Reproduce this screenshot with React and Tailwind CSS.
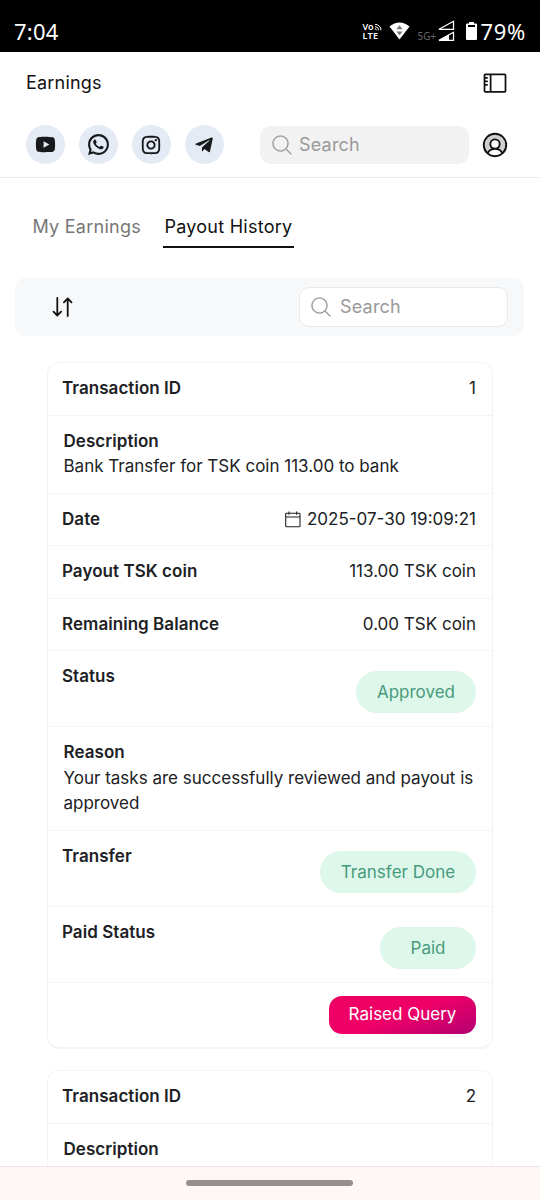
import React from "react";
import { PiSidebar, PiUserCircleDuotone, PiMagnifyingGlassLight } from "react-icons/pi";
import { RiYoutubeFill, RiWhatsappLine, RiInstagramLine } from "react-icons/ri";
import { FaTelegramPlane } from "react-icons/fa";

function StatusBar() {
  return (
    <div className="flex h-[52px] shrink-0 items-start justify-between bg-black pt-[17px] pr-[14px] pl-[14px] font-['Noto_Sans',sans-serif] text-white">
      <span className="text-[22px] leading-[28px] tracking-[0.2px]">7:04</span>
      <div className="flex h-[28px] items-center">
        <div className="mr-[7px] flex w-[20px] flex-col text-[9px] font-semibold">
          <span className="flex h-[9px] items-center leading-[9px]">
            Vo
            <svg width="8" height="8" viewBox="0 0 8 8" fill="none" stroke="currentColor" strokeWidth="1">
              <path d="M1 1.3a6 6 0 0 1 6 6M1 3.5a3.8 3.8 0 0 1 3.6 3.8M1 5.7a1.6 1.6 0 0 1 1.4 1.6" />
            </svg>
          </span>
          <span className="h-[9px] leading-[9px] tracking-[0.3px]">LTE</span>
        </div>
        <svg className="mr-[7px]" width="21" height="18" viewBox="0 0 21 18">
          <path d="M0.5 4.5Q10.500-3.500 20.500 4.500L10.500 17.500Z" fill="#fff" />
          <path d="M7.500 7.300L10.500 3.300L13.500 7.300ZM7.500 9.500L10.500 13.500L13.500 9.500Z" fill="#777" />
        </svg>
        <span className="mt-[10px] w-[20px] text-[10px] leading-[12px] whitespace-nowrap text-[#666]">5G+</span>
        <svg className="mr-[11px]" width="18" height="22" viewBox="0 0 18 22">
          <path d="M2 9.300L16.500 1.300V9.300Z" fill="none" stroke="#fff" strokeWidth="1.300" />
          <path d="M2 20.300L16.500 12.300V20.300Z" fill="none" stroke="#fff" strokeWidth="1.300" />
          <path d="M2 20.300L12 14.500V20.300Z" fill="#fff" />
        </svg>
        <svg className="mr-[3px]" width="11" height="18" viewBox="0 0 11 18">
          <path d="M3 0H8V1.500H10Q11 1.500 11 2.500V17Q11 18 10 18H1Q0 18 0 17V2.500Q0 1.500 1 1.500H3Z" fill="#fff" />
          <path d="M2 3H9V5H2Z" fill="#000" />
        </svg>
        <span className="text-[22px] leading-[28px] tracking-[0.700px]">79%</span>
      </div>
    </div>
  );
}

function Social({ children }) {
  return (
    <button className="flex size-[39px] items-center justify-center rounded-full bg-[#e5ebf5] pr-px text-[#17191c]">
      {children}
    </button>
  );
}

function Header() {
  return (
    <header className="h-[126px] shrink-0 border-b border-[#ebebeb] px-[26px]">
      <div className="flex h-[62px] items-center justify-between">
        <h1 className="mb-px text-[18px] tracking-[0.2px] text-[#111]">Earnings</h1>
        <PiSidebar className="mr-[5px] size-[28px] text-[#111]" />
      </div>
      <div className="mt-[11px] flex items-center">
        <div className="flex gap-[14px]">
          <Social><RiYoutubeFill size={23} /></Social>
          <Social><RiWhatsappLine size={25} /></Social>
          <Social><RiInstagramLine size={22} /></Social>
          <Social><FaTelegramPlane size={20} /></Social>
        </div>
        <div className="ml-[36px] flex h-[38px] w-[209px] items-center rounded-[11px] bg-[#f2f2f2] pl-[10px] text-[#999]">
          <PiMagnifyingGlassLight className="size-[24px]" stroke="currentColor" strokeWidth="2" />
          <span className="ml-[5px] text-[18px] tracking-[0.2px]">Search</span>
        </div>
        <PiUserCircleDuotone className="ml-[11px] size-[30px] shrink-0 text-[#111]" />
      </div>
    </header>
  );
}

function Row({ label, value, tall }) {
  return (
    <div className={tall ? "flex h-[76px] justify-between border-b border-[#f3f4f4] pt-[13px] pr-[16px] pl-[14px]" : "flex h-[52.500px] items-center justify-between border-b border-[#f3f4f4] pr-[16px] pl-[14px]"}>
      <span className="font-semibold tracking-[0.050px]">{label}</span>
      {value}
    </div>
  );
}

function Block({ label, text, className }) {
  return (
    <div className={`border-b border-[#f3f4f4] px-[15.500px] pt-[13px] ${className}`}>
      <div className="font-semibold tracking-[0.050px]">{label}</div>
      <p>{text}</p>
    </div>
  );
}

function Pill({ children, className }) {
  return (
    <span className={`mt-[7px] flex h-[42px] items-center justify-center rounded-full bg-[#def7eb] pt-px text-[#479b7b] ${className}`}>
      {children}
    </span>
  );
}

function Calendar() {
  return (
    <svg width="16" height="17" viewBox="0 0 16 17" fill="none" stroke="currentColor" strokeWidth="1.100">
      <rect x="0.700" y="2.200" width="14.300" height="13.600" rx="0.800" />
      <path d="M0.700 6H15M4 0.500V3.800M11.700 0.500V3.800" />
    </svg>
  );
}

function PayoutCard({ id, details }) {
  return (
    <section className="mx-[47px] mb-[21px] h-[687px] shrink-0 rounded-[12px] border border-b-2 border-[#f3f4f4] text-[17px] leading-[25.500px] text-[#202124]">
      <Row label="Transaction ID" value={<span>{id}</span>} />
      {details ? (
        <>
          <Block label="Description" text={details.description} className="h-[78px]" />
          <Row label="Date" value={<span className="flex items-center gap-[6px]"><Calendar />{details.date}</span>} />
          <Row label="Payout TSK coin" value={<span>{details.payout}</span>} />
          <Row label="Remaining Balance" value={<span>{details.balance}</span>} />
          <Row tall label="Status" value={<Pill className="w-[120px]">{details.status}</Pill>} />
          <Block label="Reason" text={details.reason} className="h-[104px]" />
          <Row tall label="Transfer" value={<Pill className="w-[156px]">{details.transfer}</Pill>} />
          <Row tall label="Paid Status" value={<Pill className="w-[96px]">{details.paid}</Pill>} />
          <div className="flex justify-end pt-[13px] pr-[16px]">
            <button className="h-[38px] w-[147px] rounded-[13px] bg-[linear-gradient(160deg,#ee0063_0%,#ee0068_50%,#b20070_100%)] text-white">
              Raised Query
            </button>
          </div>
        </>
      ) : (
        <Block label="Description" className="h-[78px]" />
      )}
    </section>
  );
}

const firstPayout = {
  description: "Bank Transfer for TSK coin 113.00 to bank",
  date: "2025-07-30 19:09:21",
  payout: "113.00 TSK coin",
  balance: "0.00 TSK coin",
  status: "Approved",
  reason: "Your tasks are successfully reviewed and payout is approved",
  transfer: "Transfer Done",
  paid: "Paid",
};

export default function App() {
  return (
    <div className="flex h-[1200px] w-[540px] flex-col overflow-hidden bg-white font-['Inter',sans-serif]">
      <StatusBar />
      <Header />
      <main className="flex min-h-0 flex-1 flex-col overflow-hidden">
        <nav className="flex h-[70px] shrink-0 items-end gap-[22px] pl-[32.500px] text-[18px] leading-[27px]">
          <span className="pb-[8px] tracking-[0.250px] text-[#777]">My Earnings</span>
          <span className="border-b-2 border-[#111] px-[1.500px] pb-[6px] tracking-[0.250px] text-[#111]">Payout History</span>
        </nav>
        <div className="mr-[16px] ml-[15px] mt-[30px] mb-[26px] flex h-[58px] shrink-0 items-center justify-between rounded-[10px] bg-[#f7f8fa] pr-[16px] pl-[36px]">
          <svg width="23" height="22" viewBox="0 0 23 22" fill="none" stroke="#111" strokeWidth="1.800" strokeLinecap="round" strokeLinejoin="round">
            <path d="M6.300 2V19M2.500 15.700L6.300 19.500L10.100 15.700M16.700 20V3M12.900 6.300L16.700 2.500L20.500 6.300" />
          </svg>
          <div className="flex h-[40px] w-[209px] items-center rounded-[10px] border border-[#e9e9ea] bg-white pl-[9px] text-[#999]">
            <PiMagnifyingGlassLight className="size-[24px]" stroke="currentColor" strokeWidth="2" />
            <span className="mb-px ml-[7px] text-[18px] tracking-[0.200px]">Search</span>
          </div>
        </div>
        <PayoutCard id="1" details={firstPayout} />
        <PayoutCard id="2" />
      </main>
      <footer className="flex h-[34px] shrink-0 justify-center border-t border-[#eee3e2] bg-[#fef7f6] pt-[13px] pr-px">
        <div className="h-[6px] w-[167px] rounded-full bg-[#958f8e]" />
      </footer>
    </div>
  );
}
